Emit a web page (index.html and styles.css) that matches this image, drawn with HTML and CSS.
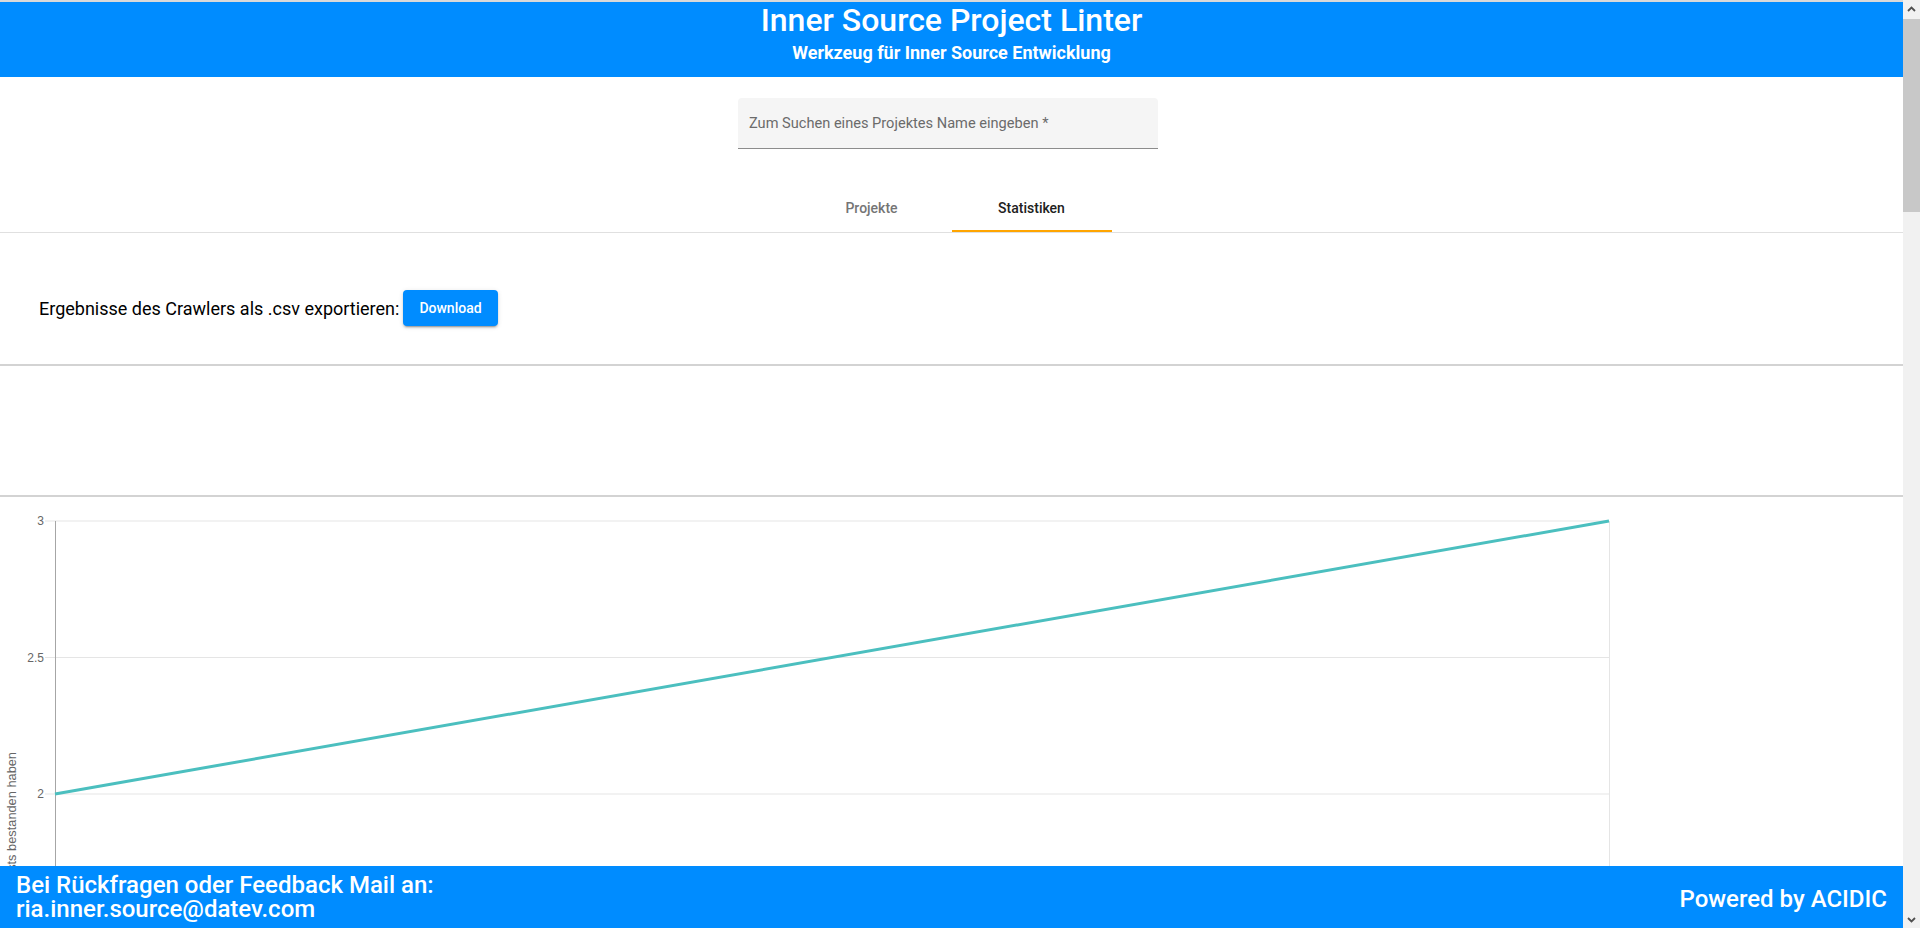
FILE: index.html
```html
<!DOCTYPE html>
<html lang="de">
<head>
<meta charset="utf-8">
<title>Inner Source Project Linter</title>
<link rel="stylesheet" href="styles.css">
</head>
<body>
<div class="app">
  <header class="topbar">
    <h1 class="title">Inner Source Project Linter</h1>
    <p class="subtitle">Werkzeug für Inner Source Entwicklung</p>
  </header>

  <main class="main">
    <div class="search-wrap">
      <div class="search-field">
        <span class="search-label">Zum Suchen eines Projektes Name eingeben *</span>
      </div>
    </div>

    <nav class="tabs">
      <div class="tab">Projekte</div>
      <div class="tab tab-active">Statistiken</div>
    </nav>

    <section class="export">
      <span class="export-text">Ergebnisse des Crawlers als .csv exportieren:</span>
      <button class="btn">Download</button>
    </section>

    <section class="empty-block"></section>

    <section class="chart-block">
      <svg class="chart" width="1903" height="880" viewBox="0 0 1903 880">
        <g class="grid">
          <line x1="45" y1="24" x2="1609" y2="24"/>
          <line x1="45" y1="160.5" x2="1609" y2="160.5"/>
          <line x1="45" y1="297" x2="1609" y2="297"/>
          <line x1="45" y1="433.5" x2="1609" y2="433.5"/>
          <line x1="45" y1="570" x2="1609" y2="570"/>
          <line x1="45" y1="706.5" x2="1609" y2="706.5"/>
          <line x1="45" y1="843" x2="1609" y2="843"/>
          <line x1="1609.5" y1="24" x2="1609.5" y2="853"/>
        </g>
        <line class="axis" x1="55.5" y1="24" x2="55.5" y2="853"/>
        <g class="ticks">
          <text x="44" y="28">3</text>
          <text x="44" y="164.5">2.5</text>
          <text x="44" y="301">2</text>
          <text x="44" y="437.5">1.5</text>
          <text x="44" y="574">1</text>
          <text x="44" y="710.5">0.5</text>
          <text x="44" y="847">0</text>
        </g>
        <text class="axis-title" transform="translate(16,255) rotate(-90)">Anzahl der Projekte, die alle Tests bestanden haben</text>
        <polyline class="series" points="55,297 1609,24"/>
      </svg>
    </section>
  </main>

  <footer class="footer">
    <div class="footer-left">Bei Rückfragen oder Feedback Mail an:<br>ria.inner.source@datev.com</div>
    <div class="footer-right">Powered by ACIDIC</div>
  </footer>
</div>

<div class="scrollbar" aria-hidden="true">
  <div class="sb-btn">
    <svg width="9" height="6" viewBox="0 0 9 6"><path d="M1 5 L4.5 1.5 L8 5" fill="none" stroke="#505050" stroke-width="1.8"/></svg>
  </div>
  <div class="sb-track">
    <div class="sb-thumb"></div>
  </div>
  <div class="sb-btn">
    <svg width="9" height="6" viewBox="0 0 9 6"><path d="M1 1 L4.5 4.5 L8 1" fill="none" stroke="#505050" stroke-width="1.8"/></svg>
  </div>
</div>
</body>
</html>
```

FILE: styles.css
```css
html, body {
  margin: 0;
  padding: 0;
}

body {
  font-family: Roboto, "Noto Sans", sans-serif;
  background: #ffffff;
  color: #000000;
  border-top: 2px solid #d9d9d9;
  padding-right: 17px;
}

.app {
  min-height: 4290px;
}

/* Header */
.topbar {
  box-sizing: border-box;
  height: 75px;
  background: #008cff;
  color: #ffffff;
  text-align: center;
}

.title {
  margin: 0;
  font-size: 32px;
  font-weight: 500;
  line-height: 37px;
}

.subtitle {
  margin: 3px 0 0;
  font-size: 18px;
  font-weight: 700;
  line-height: 21px;
}

/* Search */
.search-wrap {
  display: flex;
  justify-content: center;
  padding-top: 21px;
  padding-right: 7px;
}

.search-field {
  box-sizing: border-box;
  width: 420px;
  height: 51px;
  background: #f5f5f5;
  border-bottom: 1px solid #8c8c8c;
  border-radius: 4px 4px 0 0;
  padding: 0 11px;
  display: flex;
  align-items: center;
}

.search-label {
  font-size: 14.6px;
  color: #6b6b6b;
}

/* Tabs */
.tabs {
  margin-top: 35px;
  display: flex;
  justify-content: center;
  border-bottom: 1px solid #e0e0e0;
}

.tab {
  box-sizing: border-box;
  width: 160px;
  height: 48px;
  display: flex;
  align-items: center;
  justify-content: center;
  font-size: 14px;
  font-weight: 500;
  color: #757575;
  border-bottom: 2px solid transparent;
  padding-top: 2px;
}

.tab-active {
  color: #212121;
  border-bottom-color: #ffa500;
}

/* Export */
.export {
  display: flex;
  align-items: center;
  padding: 57px 0 38px 39px;
  border-bottom: 2px solid #d3d3d3;
}

.export-text {
  font-size: 18px;
  color: #000000;
}

.btn {
  margin-left: 4px;
  height: 36px;
  padding: 0 16px;
  border: none;
  border-radius: 4px;
  background: #008cff;
  color: #ffffff;
  font-family: Roboto, sans-serif;
  font-size: 14px;
  font-weight: 500;
  box-shadow: 0 3px 1px -2px rgba(0,0,0,.2), 0 2px 2px 0 rgba(0,0,0,.14), 0 1px 5px 0 rgba(0,0,0,.12);
}

.empty-block {
  height: 129px;
  border-bottom: 2px solid #d3d3d3;
}

/* Chart */
.chart-block {
  display: block;
}

.chart {
  display: block;
}

.grid line {
  stroke: #e5e5e5;
  stroke-width: 1;
}

.axis {
  stroke: #a6a6a6;
  stroke-width: 1;
}

.ticks text {
  font-family: "Liberation Sans", Arial, sans-serif;
  font-size: 12px;
  fill: #666666;
  text-anchor: end;
}

.axis-title {
  font-family: "Liberation Sans", Arial, sans-serif;
  font-size: 12.8px;
  fill: #666666;
  text-anchor: end;
}

.series {
  fill: none;
  stroke: #4bbfbf;
  stroke-width: 3;
}

/* Footer */
.footer {
  position: fixed;
  left: 0;
  right: 17px;
  bottom: 0;
  height: 62px;
  box-sizing: border-box;
  padding: 0 16px;
  background: #008cff;
  color: #ffffff;
  display: flex;
  align-items: center;
  justify-content: space-between;
  font-size: 24px;
  font-weight: 500;
  line-height: 24px;
}

.footer-right {
  padding-top: 3px;
}

/* Window scrollbar (drawn, the capture hides the native one) */
.scrollbar {
  position: fixed;
  top: 0;
  right: 0;
  bottom: 0;
  width: 17px;
  background: #f1f1f1;
  display: flex;
  flex-direction: column;
}

.sb-btn {
  height: 17px;
  display: flex;
  align-items: center;
  justify-content: center;
  flex: none;
}

.sb-track {
  flex: 1;
  padding-top: 2px;
}

.sb-thumb {
  height: 193px;
  background: #c8c8c8;
}
```
